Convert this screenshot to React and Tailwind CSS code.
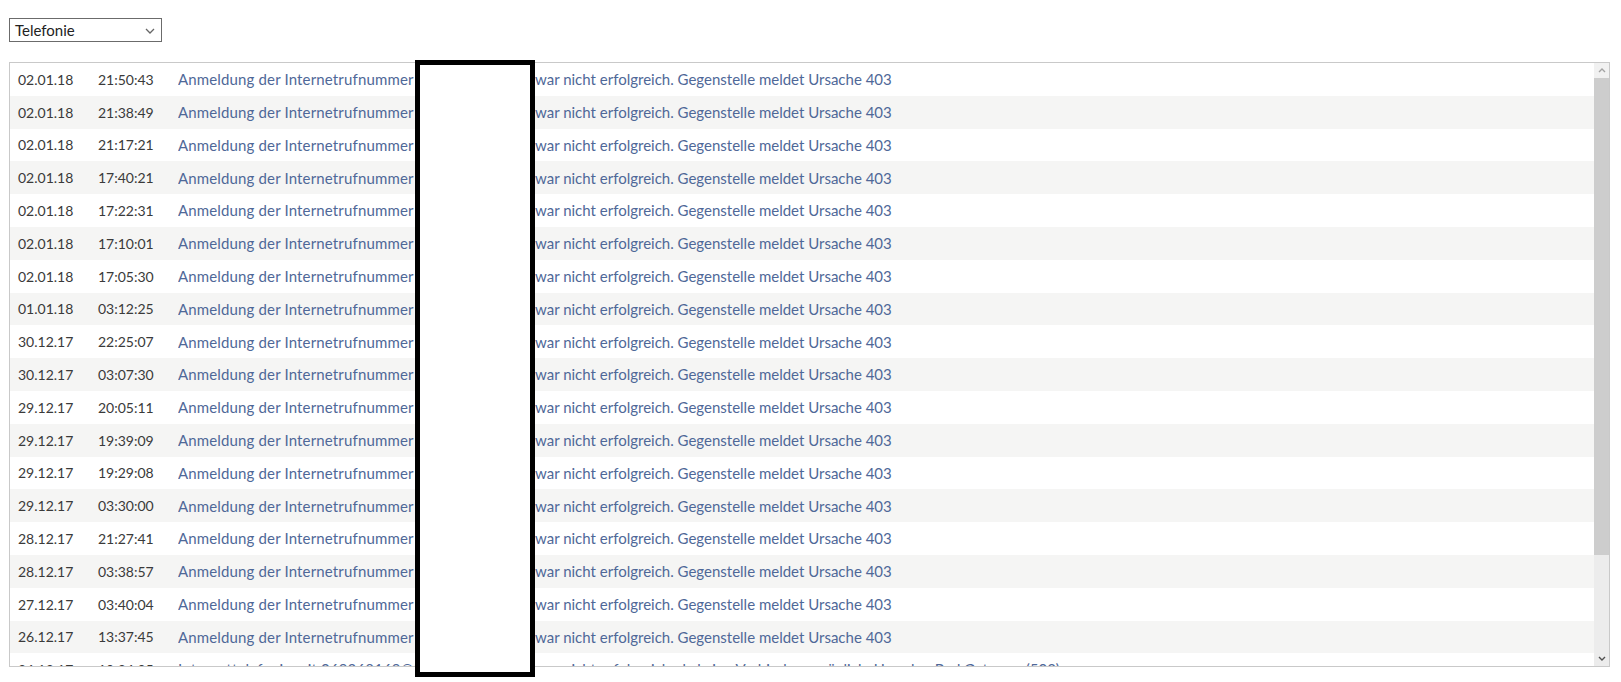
import React from "react";

const rows = [
  ["02.01.18", "21:50:43"],
  ["02.01.18", "21:38:49"],
  ["02.01.18", "21:17:21"],
  ["02.01.18", "17:40:21"],
  ["02.01.18", "17:22:31"],
  ["02.01.18", "17:10:01"],
  ["02.01.18", "17:05:30"],
  ["01.01.18", "03:12:25"],
  ["30.12.17", "22:25:07"],
  ["30.12.17", "03:07:30"],
  ["29.12.17", "20:05:11"],
  ["29.12.17", "19:39:09"],
  ["29.12.17", "19:29:08"],
  ["29.12.17", "03:30:00"],
  ["28.12.17", "21:27:41"],
  ["28.12.17", "03:38:57"],
  ["27.12.17", "03:40:04"],
  ["26.12.17", "13:37:45"],
];

function Row({ date, time, first, number, rest, alt }) {
  return (
    <div
      className={`grid grid-cols-[80px_80px_1fr] h-[32.8px] items-center whitespace-nowrap ${
        alt ? "bg-[#f5f5f4]" : "bg-white"
      }`}
    >
      <div className="pl-[8px] text-[14px] text-[#3a3a3a]">{date}</div>
      <div className="pl-[8px] text-[14px] text-[#3a3a3a]">{time}</div>
      <div className="pl-[8px] text-[15px] text-[#4f6898] overflow-hidden">
        <span className="inline-block w-[242px] overflow-hidden align-top tracking-[0.15px]">{first}</span>
        <span className="inline-block w-[115px] overflow-hidden align-top">{number}</span>
        {rest}
      </div>
    </div>
  );
}

export default function App() {
  return (
    <div
      className="relative w-[1621px] h-[682px] bg-white text-[14px]"
      style={{ fontFamily: "Lato, 'Open Sans', sans-serif" }}
    >
      <div className="pt-[18px] pl-[9px]">
        <div className="flex items-center justify-between w-[153px] h-[24px] border border-[#6b6b6b] bg-white pl-[5px] pr-[6px] text-[15px] text-[#222]">
          <span>Telefonie</span>
          <svg width="10" height="6" viewBox="0 0 10 6" className="mt-[1px]">
            <path d="M1 1 L5 5 L9 1" fill="none" stroke="#666" strokeWidth="1.3" />
          </svg>
        </div>
      </div>

      <div className="ml-[9px] mt-[20px] w-[1601px] h-[605px] border border-[#c9c9c9] flex overflow-hidden">
        <div className="flex-1 overflow-hidden">
          {rows.map(([d, t], i) => (
            <Row
              key={i}
              date={d}
              time={t}
              alt={i % 2 === 1}
              first="Anmeldung der Internetrufnummer"
              number="069268169"
              rest="war nicht erfolgreich. Gegenstelle meldet Ursache 403"
            />
          ))}
          <Row
            date="26.12.17"
            time="10:24:05"
            alt={false}
            first="Internettelefonie mit 069268169@t"
            number="el.t-online.de"
            rest="war nicht erfolgreich, da keine Verbindung möglich. Ursache: Bad Gateway (502)"
          />
        </div>
        <div className="w-[15px] flex flex-col bg-[#ececec]">
          <div className="h-[15px] flex items-center justify-center bg-[#f1f1f1]">
            <svg width="8" height="5" viewBox="0 0 8 5">
              <path d="M1 4 L4 1 L7 4" fill="none" stroke="#a3a3a3" strokeWidth="1.4" />
            </svg>
          </div>
          <div className="h-[477px] bg-[#cdcdcd]" />
          <div className="flex-1" />
          <div className="h-[15px] flex items-center justify-center">
            <svg width="8" height="5" viewBox="0 0 8 5">
              <path d="M1 1 L4 4 L7 1" fill="none" stroke="#505050" strokeWidth="1.4" />
            </svg>
          </div>
        </div>
      </div>

      <div className="absolute left-[415px] top-[60px] w-[120px] h-[617px] border-[5px] border-black bg-white" />
    </div>
  );
}
